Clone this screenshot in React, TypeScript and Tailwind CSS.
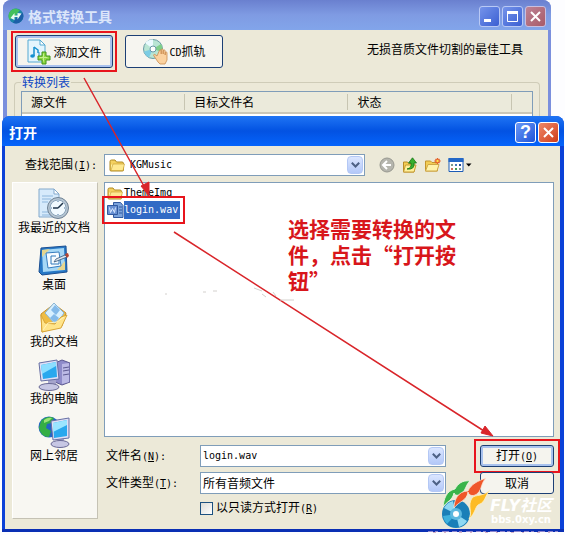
import type { ReactNode } from 'react';

interface Place {
  label: string;
  icon: ReactNode;
}

function Mono({ children }: { children: ReactNode }) {
  return <span className="font-['DejaVu_Sans_Mono',monospace] text-[10px]">{children}</span>;
}

function AppIcon() {
  return (
    <svg width="16" height="16" viewBox="0 0 16 16">
      <circle cx="8" cy="8" r="7.5" fill="#1b86a8" />
      <path d="M8 .5A7.5 7.5 0 0 0 1.5 11.700L8 7 12 2z" fill="#43c05c" />
      <path d="M14.500 4.500A7.500 7.500 0 0 1 5 14.800L9 9z" fill="#1d5fa8" />
      <path d="M2.500 10l4-5v2.500h3V5l4 .5-4 6V9h-3v3z" fill="#e9fbf2" />
    </svg>
  );
}

function AddMusicIcon() {
  return (
    <svg width="26" height="26" viewBox="0 0 26 26">
      <path d="M2 1h12l5 5v17H2z" fill="#e4f5fd" stroke="#54a9d2" />
      <path d="M14 1v5h5z" fill="#fff" stroke="#54a9d2" />
      <path d="M8 8v9M8 8l4 3v3" stroke="#1590cf" strokeWidth="1.500" fill="none" />
      <ellipse cx="6.500" cy="17" rx="2.300" ry="1.800" fill="#1590cf" />
      <path d="M13 13v6" stroke="#1590cf" />
      <path d="M16 13h4v4h4v4h-4v4h-4v-4h-4v-4h4z" fill="#8cd743" stroke="#3f941b" />
      <path d="M17.500 14.500v8M13.500 18.500h8" stroke="#c5f08c" />
    </svg>
  );
}

function DiscHandIcon() {
  return (
    <svg width="26" height="26" viewBox="0 0 26 26">
      <circle cx="11" cy="10" r="9.500" fill="#b9e5d4" stroke="#6a9ba6" />
      <path d="M11 10L3 4a10 10 0 0 1 8-3.500z" fill="#ecfaff" />
      <path d="M11 10l8-5a9.500 9.500 0 0 1 1 8z" fill="#7fcf8a" />
      <path d="M11 10l-4 8.500a9.500 9.500 0 0 1-5-6z" fill="#7ccce4" />
      <circle cx="11" cy="10" r="3" fill="#fff" stroke="#6a9ba6" />
      <path
        d="M15 17l-2-1.500c-1-.5-2 .5-1 1.500l4 6 2 2h5l2-4v-7c0-1.500-1.500-1.500-1.800 0v2-4c0-1.500-1.900-1.500-2 0v3-4c0-1.500-2-1.500-2 0v4-3c0-1.500-2-1.500-2 0z"
        fill="#fbd2a0"
        stroke="#c98b4f"
        strokeWidth=".8"
      />
    </svg>
  );
}

function FolderIcon() {
  return (
    <svg width="16" height="16" viewBox="0 0 16 16">
      <path d="M1 4.500Q1 3 2.500 3H6l1.500 2H13q1.500 0 1.500 1.500V13q0 1-1 1H2q-1 0-1-1z" fill="#f4d160" stroke="#b08a22" />
      <path d="M2 7.500h11.500V13H2z" fill="#fff0a3" />
      <path d="M4 7h11.500l-1.500 6.500H2z" fill="#ffe991" stroke="#c59c30" strokeWidth=".6" />
    </svg>
  );
}

function WavIcon() {
  return (
    <svg width="17" height="16" viewBox="0 0 17 16">
      <path d="M6.500.5h7l2.500 3v12H6.500z" fill="#7ba3dc" stroke="#31599f" />
      <path d="M12 5h3M12 8h3M12 11h3" stroke="#31599f" />
      <path d="M.5 3.500h10v9H.5z" fill="#6991d3" stroke="#31599f" />
      <path d="M2.500 5.500l1 5 2-4 2 4 1-5" stroke="#d9e7ff" fill="none" />
    </svg>
  );
}

function RecentIcon() {
  return (
    <svg width="32" height="32" viewBox="0 0 32 32">
      <path d="M1 1h15l5 5v23H1z" fill="#d6eafb" stroke="#84a9cc" />
      <path d="M16 1v5h5z" fill="#fff" stroke="#84a9cc" />
      <path d="M4 8h11M4 11h9M4 14h6M4 24h7M4 27h14" stroke="#8db6dc" />
      <circle cx="20" cy="20" r="10.500" fill="#b6c5d2" stroke="#6d8194" />
      <circle cx="20" cy="20" r="8" fill="#f1faff" stroke="#8ba5bb" />
      <path d="M20 20l5-5M20 20h-5" stroke="#20364c" strokeWidth="1.500" />
      <path d="M20 13v1M20 26v1M13 20h1M26 20h1" stroke="#4f77a0" />
    </svg>
  );
}

function DesktopIcon() {
  return (
    <svg width="32" height="32" viewBox="0 0 32 32">
      <path d="M3 3l25-2 1 26-25 3-3-3z" fill="#2879c6" stroke="#1b4f91" />
      <path d="M4 5l22-2 1 22-22 2z" fill="#a6d8f6" />
      <path d="M4 5l8-1-8 8zM27 25h-8l8-9z" fill="#e6d68f" />
      <path d="M8 8l13-1 2 14-13 2z" fill="#f7fcff" stroke="#377dbe" />
      <path d="M18 11h-5v8h8v-4" fill="none" stroke="#2f78ba" />
      <path d="M16 17l2-3 9-4 2 2-10 4z" fill="#dce5ed" stroke="#355779" strokeWidth=".8" />
      <path d="M27 9l3-1 1 3-2 2z" fill="#b84631" />
    </svg>
  );
}

function DocumentsIcon() {
  return (
    <svg width="32" height="32" viewBox="0 0 32 32">
      <path d="M3 12L16 2l12 9-4 13-20 6z" fill="#efbd43" stroke="#c8922f" />
      <path d="M7 11L16 1l10 10-8 12z" fill="#d8f0ff" stroke="#8ab6d6" />
      <path d="M13 8l4-5 5 5-4 5zM12 16l4-4 5 4-4 5z" fill="#84bae9" />
      <path d="M3 13l1 17 19-4 6-13-6 2-6 7-10-1z" fill="#ffe48a" stroke="#d9a639" />
      <path d="M5 28l5-7 9-1 7-5" fill="none" stroke="#fff3bd" />
    </svg>
  );
}

function ComputerIcon() {
  return (
    <svg width="32" height="32" viewBox="0 0 32 32">
      <path d="M17 4l7-3 8 3v19l-8 3-7-3z" fill="#8e8bc9" stroke="#5c5990" />
      <path d="M24 5l7-1v19l-7 2z" fill="#bbb9e5" />
      <path d="M25 9l6-1M25 12l6-1M25 16l6-1" stroke="#5c5990" />
      <path d="M10 20l8 1v5h-8z" fill="#a6a5cc" />
      <ellipse cx="11" cy="28" rx="10" ry="3.500" fill="#c7c7e4" stroke="#696995" />
      <path d="M1 4l18-3 2 19-18 2z" fill="#dedff6" stroke="#676fa4" />
      <path d="M3 6l15-3 1 15-14 2z" fill="#29a8ee" />
      <path d="M3 6l15-3v4L4 15z" fill="#8cdeff" />
    </svg>
  );
}

function NetworkIcon() {
  return (
    <svg width="32" height="32" viewBox="0 0 32 32">
      <circle cx="11" cy="11" r="10.500" fill="#2365c5" />
      <path d="M3 5q6-6 13-3l-3 5-4 1-1 4 5 3-2 6q-8 0-10-9z" fill="#35ae45" />
      <path d="M6 4q4-3 8-2l-3 3-5 2z" fill="#9be476" />
      <path d="M20 21h6v6h-6z" fill="#a6a5cc" />
      <ellipse cx="22" cy="28" rx="9" ry="3.500" fill="#c7c7e4" stroke="#696995" />
      <path d="M13 5l18-3v20l-16 2z" fill="#dedff6" stroke="#676fa4" />
      <path d="M15 7l14-3v16l-13 2z" fill="#29a8ee" />
      <path d="M15 7l14-3v5l-14 7z" fill="#9be5ff" />
    </svg>
  );
}

function BackIcon() {
  return (
    <svg width="16" height="16" viewBox="0 0 16 16">
      <circle cx="8" cy="8" r="7" fill="#b5b5ad" stroke="#989890" />
      <path d="M12 8H4.500M8 4L4 8l4 4" fill="none" stroke="#fff" strokeWidth="2" />
    </svg>
  );
}

function UpFolderIcon() {
  return (
    <svg width="16" height="16" viewBox="0 0 16 16">
      <path d="M1.500 5h4l1 1.500H12V15H1.500z" fill="#f3cd55" stroke="#b78b27" />
      <path d="M3.500 8H14l-2 7H1.500z" fill="#fff09b" stroke="#c79c34" />
      <path d="M5 12q5-1 4-6H6.500L10.500.800 14.500 6H12q1 7-7 6z" fill="#36af2e" stroke="#167514" strokeWidth=".8" />
    </svg>
  );
}

function NewFolderIcon() {
  return (
    <svg width="16" height="16" viewBox="0 0 16 16">
      <path d="M.5 4h5L7 5.500h5.500V14H.5z" fill="#f3cd55" stroke="#c3952d" />
      <path d="M3 7.500h11L12 14H.5z" fill="#fff3ab" stroke="#cfa847" />
      <path d="M12.500 1v6M9.500 4h6M10.500 2l4 4M14.500 2l-4 4" stroke="#e4602b" strokeWidth="1.300" />
      <circle cx="12.500" cy="4" r="1.200" fill="#ffe04a" />
    </svg>
  );
}

function ViewsIcon() {
  return (
    <svg width="24" height="16" viewBox="0 0 24 16">
      <path d="M1 1.500h14v13H1z" fill="#fff" stroke="#1d5cb6" />
      <path d="M.5 1h15v4H.5z" fill="#2468c7" />
      <path d="M3 7h2v2H3zM11 11h2v2h-2z" fill="#7c9a88" />
      <path d="M7 7h2v2H7z" fill="#4978bb" />
      <path d="M11 7h2v2h-2z" fill="#274f93" />
      <path d="M3 11h2v2H3z" fill="#c46f5d" />
      <path d="M7 11h2v2H7z" fill="#3f9a52" />
      <path d="M18 6.500h5.500L20.800 9.500z" fill="#000" />
    </svg>
  );
}

function Chevron() {
  return (
    <span className="flex h-full w-4 items-center justify-center rounded-sm border border-[#b4c8f5] bg-linear-to-b from-[#dbe6ff] to-[#b3c8f8]">
      <svg width="9" height="6" viewBox="0 0 9 6">
        <path d="M.8.8l3.700 3.700L8.200.8" fill="none" stroke="#4d6185" strokeWidth="2" />
      </svg>
    </span>
  );
}

function FlameDisc() {
  return (
    <svg width="48" height="52" viewBox="0 0 48 52">
      <circle cx="14" cy="37" r="14" fill="#1a7fb8" />
      <path d="M14 37L2 31a13 13 0 0 1 9-7zM14 37l11 7a13 13 0 0 1-8 6z" fill="#8fd8f2" />
      <path d="M14 37L5 47a13 13 0 0 1-4-8z" fill="#3eb1dd" />
      <circle cx="14" cy="37" r="6" fill="#5cb8df" />
      <circle cx="14" cy="37" r="3" fill="#fff" />
      <path
        d="M1 30C2 22 4 14 13 12c3-5 7-9 15-8-4 3-4 9-8 12-3 3-7 3-8 0-2 8-7 8-11 14z"
        fill="#39b44a"
        stroke="#f1fae8"
        strokeWidth=".8"
      />
      <path
        d="M12 31c0-8 4-17 14-17 3-7 10-10 18-13-5 5-4 11-8 15-4 4-9 3-10-1-1 9-9 9-14 16z"
        fill="#ef5629"
        stroke="#fbe6d7"
        strokeWidth=".8"
      />
      <path d="M27 42c4-7-2-13 3-21 4-4 11-1 18-8-5 6-5 12-10 14-5 1-4 9-11 15z" fill="#fdbb24" stroke="#fff1c3" strokeWidth=".8" />
    </svg>
  );
}

const places: Place[] = [
  { label: '我最近的文档', icon: <RecentIcon /> },
  { label: '桌面', icon: <DesktopIcon /> },
  { label: '我的文档', icon: <DocumentsIcon /> },
  { label: '我的电脑', icon: <ComputerIcon /> },
  { label: '网上邻居', icon: <NetworkIcon /> },
];

const captionButton = 'flex size-[21px] items-center justify-center rounded-[3px] border';

function ConverterWindow() {
  return (
    <section className="ml-[3px] mr-[14px] rounded-t-lg bg-[#7b8fdd]">
      <header className="flex h-[30px] items-center gap-1 rounded-t-lg bg-linear-to-b from-[#6a80cf] via-[#7f9be3] to-[#82a5ea] pl-[5px] pr-[5px] pt-[2px]">
        <AppIcon />
        <h1 className="flex-1 text-sm leading-4 font-bold text-[#dce6fa]">格式转换工具</h1>
        <div className="flex gap-[2px]">
          <button aria-label="最小化" className={`${captionButton} border-[#b9c9f5] bg-linear-to-br from-[#7593ea] to-[#3c5fd2]`}>
            <svg width="15" height="15" viewBox="0 0 15 15">
              <path d="M2 10h7v3H2z" fill="#fff" />
            </svg>
          </button>
          <button aria-label="最大化" className={`${captionButton} border-[#b9c9f5] bg-linear-to-br from-[#7593ea] to-[#3c5fd2]`}>
            <svg width="15" height="15" viewBox="0 0 15 15">
              <path d="M2.500 3h10v9.500h-10z" fill="none" stroke="#fff" />
              <path d="M2 2h11v3H2z" fill="#fff" />
            </svg>
          </button>
          <button aria-label="关闭" className={`${captionButton} border-[#c9bfdf] bg-linear-to-br from-[#bd8396] to-[#a85a68]`}>
            <svg width="15" height="15" viewBox="0 0 15 15">
              <path d="M3 3l9 9M12 3l-9 9" stroke="#fff" strokeWidth="2" />
            </svg>
          </button>
        </div>
      </header>

      <div className="ml-1 mr-[3px] bg-[#ece9d8] pt-[5px]">
        <div className="flex items-start pl-2">
          <div className="outline-2 outline-offset-2 outline-[#e8141c]">
            <button className="flex h-[33px] w-[98px] items-center justify-center gap-px rounded-[3px] border border-[#1c3f75] bg-[#f5f4ee] inset-shadow-[0_0_0_2px_#a9c2ee]">
              <AddMusicIcon />
              添加文件
            </button>
          </div>
          <button className="ml-3 flex h-[33px] w-[98px] items-center justify-center gap-px rounded-[3px] border border-[#1c3f75] bg-[#f6f5f0]">
            <DiscHandIcon />
            <span>
              <Mono>CD</Mono>抓轨
            </span>
          </button>
          <p className="ml-auto mr-[25px] mt-[6px]">无损音质文件切割的最佳工具</p>
        </div>

        <fieldset className="ml-[7px] mr-2 mt-[7px] rounded-t border border-b-0 border-[#cfccb8] px-[6px]">
          <legend className="px-px leading-[14px] text-[#0e47c4]">转换列表</legend>
          <div className="mt-[2px] border border-b-0 border-[#7f9db9] bg-white pb-[11px]">
            <table className="w-full table-fixed border-b-2 border-[#cbc7b8] bg-[#ebeadb] text-left">
              <thead>
                <tr>
                  {['源文件', '目标文件名', '状态'].map((name) => (
                    <th key={name} scope="col" className="w-[32%] py-[2px] font-normal">
                      <div className="border-r border-[#c7c5b2] pl-[9px] leading-4">{name}</div>
                    </th>
                  ))}
                  <td />
                </tr>
              </thead>
            </table>
          </div>
        </fieldset>
      </div>
    </section>
  );
}

function PlacesBar() {
  return (
    <nav className="flex w-[86px] shrink-0 flex-col items-center gap-[11px] border border-l-white border-t-white border-r-[#c5c2b4] border-b-[#c5c2b4] bg-[#f8f7f2] pt-[5px] pr-[2px]">
      {places.map(({ label, icon }) => (
        <button key={label} className="flex flex-col items-center whitespace-nowrap leading-[14px]">
          {icon}
          {label}
        </button>
      ))}
    </nav>
  );
}

function FileList() {
  return (
    <div className="h-[255px] border border-[#7f9db9] bg-white">
      <ul className="flex flex-col items-start pl-[2px] pt-px">
        <li className="flex h-[17px] items-center gap-px">
          <FolderIcon />
          <Mono>ThemeImg</Mono>
        </li>
        <li className="flex h-[18px] items-center outline-2 outline-offset-3 outline-[#e8141c]">
          <WavIcon />
          <span className="flex h-full items-center bg-[#316ac5] pr-[2px] text-white">
            <Mono>login.wav</Mono>
          </span>
        </li>
      </ul>
      <p className="-mt-1 ml-[183px] w-[170px] text-[21px] leading-[26px] font-bold text-[#d8161b]">选择需要转换的文件，点击“打开按钮”</p>
    </div>
  );
}

const dialogButton = 'h-[22px] w-[74px] rounded-[3px] border border-[#1c3f75] bg-[#f5f4ee] leading-4';

function FileFields() {
  return (
    <div className="mt-2 grid grid-cols-[96px_1fr_74px] items-center gap-y-[5px] pb-[2px]">
      <label htmlFor="file-name" className="pl-[2px]">
        文件名<Mono>(<u>N</u>):</Mono>
      </label>
      <div className="mr-[34px] flex h-[22px] border border-[#7f9db9] bg-white p-px">
        <input
          id="file-name"
          defaultValue="login.wav"
          className="min-w-0 flex-1 px-px font-['DejaVu_Sans_Mono',monospace] text-[10px] outline-none"
        />
        <button aria-label="文件名列表">
          <Chevron />
        </button>
      </div>
      <div className="h-[22px] outline-2 outline-offset-4 outline-[#e8141c]">
        <button className={`${dialogButton} inset-shadow-[0_0_0_2px_#a9c2ee]`}>
          打开<Mono>(<u>O</u>)</Mono>
        </button>
      </div>

      <label htmlFor="file-type" className="pl-[2px]">
        文件类型<Mono>(<u>T</u>):</Mono>
      </label>
      <div className="relative mr-[34px] h-[22px]">
        <select id="file-type" className="size-full appearance-none border border-[#7f9db9] bg-white pl-[2px]">
          <option>所有音频文件</option>
        </select>
        <span className="pointer-events-none absolute inset-y-[2px] right-[2px]">
          <Chevron />
        </span>
      </div>
      <button className={dialogButton}>取消</button>

      <label className="col-start-2 flex items-center gap-[3px]">
        <input type="checkbox" className="size-[13px] appearance-none border border-[#1c5180] bg-linear-to-br from-[#dcdcd7] to-white" />
        <span>
          以只读方式打开<Mono>(<u>R</u>)</Mono>
        </span>
      </label>
    </div>
  );
}

function Watermark() {
  return (
    <div className="pointer-events-none absolute bottom-0 right-1 flex items-end">
      <FlameDisc />
      <div className="-ml-2 flex w-[78px] flex-col items-center pb-[2px] font-bold text-white">
        <p className="font-['DejaVu_Sans','Noto_Sans_CJK_SC',sans-serif] text-base leading-[14px] whitespace-nowrap italic">FLY社区</p>
        <p className="font-['DejaVu_Sans',sans-serif] text-[10px] leading-[14px]">bbs.0xy.cn</p>
      </div>
    </div>
  );
}

function OpenDialog() {
  return (
    <section
      role="dialog"
      aria-labelledby="open-title"
      className="relative -mt-[9px] ml-[2px] mr-px rounded-t-lg border-b-[3px] border-[#0a2fb4] bg-[#0b41d8]"
    >
      <header className="flex h-[30px] items-center gap-[2px] rounded-t-lg bg-linear-to-b from-[#1f74f4] via-[#0352e2] to-[#0564fb] pl-[7px] pr-[5px] pt-[2px]">
        <h2 id="open-title" className="flex-1 text-sm leading-4 font-bold text-white">
          打开
        </h2>
        <button aria-label="帮助" className={`${captionButton} border-white bg-linear-to-br from-[#6b98f6] to-[#1f52d8] font-['Liberation_Sans',sans-serif] text-lg leading-4 font-bold text-white`}>
          ?
        </button>
        <button aria-label="关闭" className={`${captionButton} border-white bg-linear-to-br from-[#ee8867] to-[#cf3a14]`}>
          <svg width="15" height="15" viewBox="0 0 15 15">
            <path d="M3 3l9 9M12 3l-9 9" stroke="#fff" strokeWidth="2" />
          </svg>
        </button>
      </header>

      <div className="ml-[3px] mr-1 bg-[#ece9d8] pb-[10px] pl-[7px] pr-[6px] pt-2">
        <div className="flex h-[22px] items-center">
          <label htmlFor="look-in" className="w-[92px] shrink-0 pl-[13px]">
            查找范围<Mono>(<u>I</u>):</Mono>
          </label>
          <div className="relative h-full flex-1">
            <select id="look-in" className="size-full appearance-none border border-[#7f9db9] bg-white pl-[25px] font-['DejaVu_Sans_Mono',monospace] text-[10px]">
              <option>KGMusic</option>
            </select>
            <span className="pointer-events-none absolute inset-y-[2px] left-[5px] flex items-center">
              <FolderIcon />
            </span>
            <span className="pointer-events-none absolute inset-y-[2px] right-[2px]">
              <Chevron />
            </span>
          </div>
          <div className="ml-[14px] mr-[82px] flex gap-[7px]">
            <button aria-label="后退"><BackIcon /></button>
            <button aria-label="向上一级"><UpFolderIcon /></button>
            <button aria-label="新建文件夹"><NewFolderIcon /></button>
            <button aria-label="查看"><ViewsIcon /></button>
          </div>
        </div>

        <div className="mt-[6px] flex gap-[6px]">
          <PlacesBar />
          <div className="min-w-0 flex-1">
            <FileList />
            <FileFields />
          </div>
        </div>
      </div>

      <Watermark />
    </section>
  );
}

function Arrows() {
  return (
    <svg className="pointer-events-none absolute left-0 top-0" width="565" height="535" viewBox="0 0 565 535">
      <g stroke="#d9252a" strokeWidth="1.500" fill="#d9252a">
        <path d="M84 78L145 188M174 232L484 431" />
        <path d="M149 196l-8-10 8-4zM493 436l-12-3 4-7z" strokeWidth="1" />
      </g>
      {/* leftover specks of the rubbed-out watermark */}
      <g fill="none">
        <path d="M165 294h2M203 292h3M213 291h4M254 288l8 3M262 294l4 3M273 292l3 4M280 300h14" stroke="#d3d0cd" />
        <path d="M428 531.500H562" stroke="#8d86cf" strokeDasharray="5 2 3 4 7 3" />
        <path d="M433 532.500H562" stroke="#d8b3c6" strokeDasharray="3 8 2 13" />
      </g>
    </svg>
  );
}

export default function App() {
  return (
    <main className="relative min-h-screen overflow-hidden bg-[#fdfdff] font-['Noto_Sans_CJK_SC',sans-serif] text-xs leading-4 text-black">
      <ConverterWindow />
      <OpenDialog />
      <Arrows />
    </main>
  );
}
